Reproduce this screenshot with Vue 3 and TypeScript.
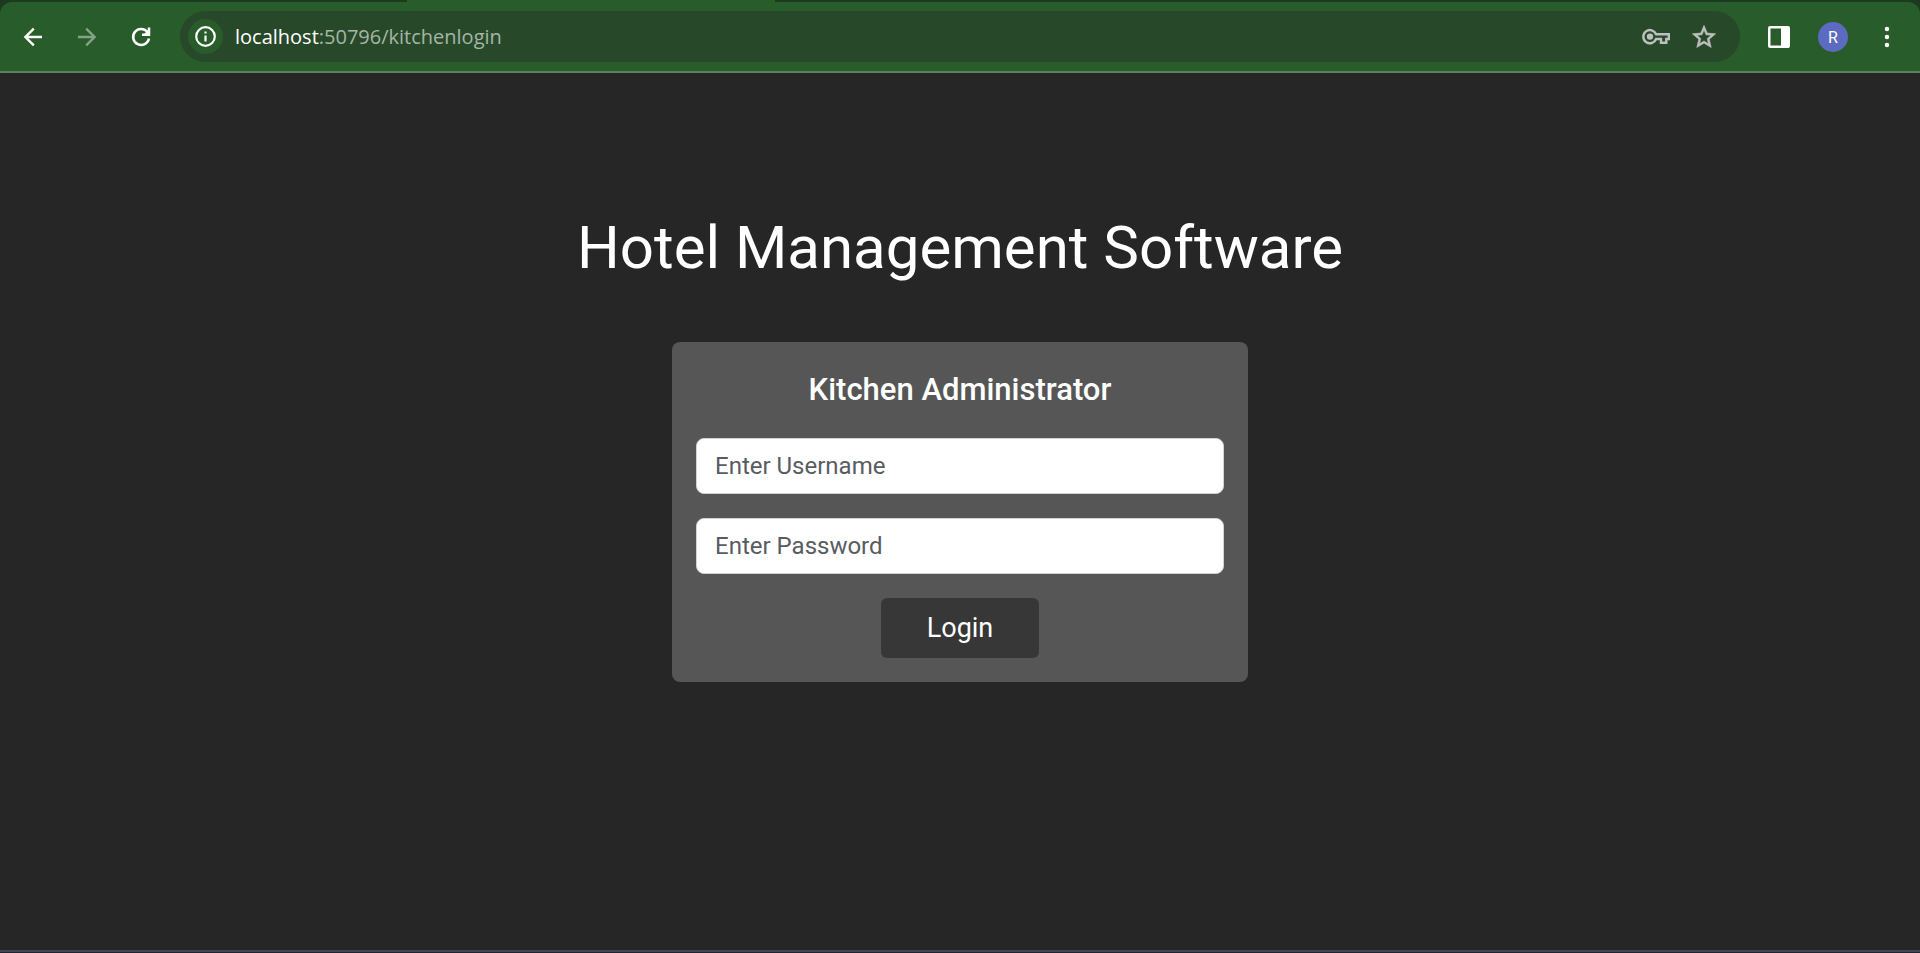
<script setup lang="ts">
import { ref } from 'vue'

const username = ref<string>('')
const password = ref<string>('')
</script>

<template>
  <div class="window">
    <div class="tab-strip"><div class="tab"></div></div>
    <div class="toolbar-back">
      <header class="toolbar">
        <nav class="tools">
          <button type="button" class="tool" aria-label="Back">
            <svg width="28" height="28" viewBox="0 0 28 28" fill="none" stroke="#fff" stroke-width="2.4">
              <path d="M23 14H7M14.8 5.6L6.4 14l8.4 8.4" />
            </svg>
          </button>
          <button type="button" class="tool" aria-label="Forward">
            <svg width="28" height="28" viewBox="0 0 28 28" fill="none" stroke="#83a385" stroke-width="2.4">
              <path d="M5 14h16M13.2 5.6l8.4 8.4l-8.4 8.4" />
            </svg>
          </button>
          <button type="button" class="tool" aria-label="Reload">
            <svg width="28" height="28" viewBox="0 0 28 28" fill="none" stroke="#fff" stroke-width="2.5">
              <path d="M22 15.4A8 8 0 1 1 20.6 9.2" />
              <path d="M22 4.6v7.2h-7" />
              <path d="M22 6l-5.5 5.8H22z" fill="#fff" stroke="none" />
            </svg>
          </button>
        </nav>

        <div class="address">
          <button type="button" class="site-info" aria-label="Site information">
            <svg width="23" height="23" viewBox="0 0 23 23" fill="none" stroke="#fff">
              <circle cx="11.5" cy="11.5" r="9.3" stroke-width="2.2" />
              <path d="M11.5 10.4v6M11.5 6.4v2.2" stroke-width="2.2" />
            </svg>
          </button>
          <div class="url" role="textbox" aria-label="Address" contenteditable="true"><span class="host">localhost</span>:50796/kitchenlogin</div>
          <button type="button" class="address-tool" aria-label="Saved passwords">
            <svg width="28" height="18" viewBox="0 0 28 18" fill="none" stroke="#bdc0be" stroke-width="2.4">
              <path d="M14.1 6.3H26.8V11H24.3V14.8H19V11H14.1A6.6 6.6 0 1 1 14.1 6.3Z" />
              <circle cx="8" cy="8.6" r="3.2" fill="#bdc0be" stroke="none" />
            </svg>
          </button>
          <button type="button" class="address-tool" aria-label="Bookmark this page">
            <svg width="28" height="28" viewBox="0 0 24 24" fill="#bdc0be" stroke="#bdc0be" stroke-width="0.5">
              <path d="M22 9.24l-7.19-.62L12 2 9.19 8.63 2 9.24l5.46 4.73L5.82 21 12 17.27 18.18 21l-1.63-7.03L22 9.24zM12 15.4l-3.76 2.27 1-4.28-3.32-2.88 4.38-.38L12 6.1l1.71 4.04 4.38.38-3.32 2.88 1 4.28L12 15.4z" />
            </svg>
          </button>
        </div>

        <div class="tools">
          <button type="button" class="tool" aria-label="Side panel">
            <svg width="22" height="22" viewBox="0 0 22 22">
              <rect width="22" height="22" rx="2" fill="#fff" />
              <path d="M2.5 2.5h10.5v17H2.5z" fill="#285c2a" />
            </svg>
          </button>
          <button type="button" class="tool" aria-label="Profile"><span class="avatar">R</span></button>
          <button type="button" class="tool" aria-label="Menu">
            <svg width="6" height="22" viewBox="0 0 6 22" fill="#fff">
              <circle cx="3" cy="3" r="2.3" />
              <circle cx="3" cy="11" r="2.3" />
              <circle cx="3" cy="19" r="2.3" />
            </svg>
          </button>
        </div>
      </header>
    </div>

    <main class="page">
      <h1 class="title">Hotel Management Software</h1>
      <form class="card" @submit.prevent>
        <h2 class="card-title">Kitchen Administrator</h2>
        <input v-model="username" class="field" type="text" placeholder="Enter Username" aria-label="Username" />
        <input v-model="password" class="field" type="password" placeholder="Enter Password" aria-label="Password" />
        <button type="submit" class="login">Login</button>
      </form>
    </main>
    <div class="window-edge"></div>
  </div>
</template>

<style>
body {
  margin: 0;
  background: #262626;
}
</style>

<style scoped>
* {
  box-sizing: border-box;
}
.window {
  display: flex;
  flex-direction: column;
  min-height: 100vh;
  background: #262626;
  font-family: Roboto, "Liberation Sans", sans-serif;
}
button {
  margin: 0;
  padding: 0;
  border: 0;
  background: none;
  font-family: inherit;
  cursor: pointer;
}
svg {
  display: block;
}
.tab-strip {
  height: 2px;
  padding-left: 407px;
  background: #1c3a1e;
}
.tab {
  width: 368px;
  height: 2px;
  background: #285c2a;
}
.toolbar-back {
  background: #1c3a1e;
}
.toolbar {
  display: flex;
  align-items: center;
  gap: 12px;
  padding: 9px 6px;
  border-bottom: 2px solid #5a835c;
  border-radius: 12px 12px 0 0;
  background: #285c2a;
}
.tools {
  display: flex;
}
.tool {
  display: flex;
  align-items: center;
  justify-content: center;
  width: 54px;
  height: 51px;
}
.address {
  display: flex;
  flex: 1;
  align-items: center;
  height: 51px;
  padding: 0 12px 0 8px;
  border-radius: 26px;
  background: #274929;
}
.site-info {
  display: flex;
  align-items: center;
  justify-content: center;
  width: 35px;
  height: 35px;
  border-radius: 50%;
  background: #285c2a;
}
.url {
  flex: 1;
  padding-left: 12px;
  color: #a5b5a6;
  font-family: "Open Sans", "Noto Sans", sans-serif;
  font-size: 20px;
  line-height: 28px;
  outline: none;
}
.host {
  color: #fff;
}
.address-tool {
  display: flex;
  align-items: center;
  justify-content: center;
  width: 48px;
  height: 48px;
}
.avatar {
  width: 30px;
  height: 30px;
  border-radius: 50%;
  background: #5c6bc0;
  color: #fff;
  font-size: 16px;
  line-height: 31px;
  text-align: center;
}
.page {
  display: flex;
  flex: 1;
  flex-direction: column;
  align-items: center;
  gap: 58px;
  padding: 139px 24px 48px;
}
.title {
  margin: 0;
  color: #fff;
  font-size: 60px;
  font-weight: 400;
  line-height: 72px;
  text-align: center;
}
.card {
  display: flex;
  flex-direction: column;
  align-items: center;
  gap: 24px;
  width: 100%;
  max-width: 576px;
  padding: 24px;
  border-radius: 8px;
  background: #565656;
}
.card-title {
  margin: 0;
  color: #fff;
  font-size: 31px;
  font-weight: 500;
  line-height: 48px;
}
.field {
  width: 100%;
  height: 56px;
  padding: 0 18px;
  border: 1px solid #ced4da;
  border-radius: 8px;
  background: #fff;
  color: #212529;
  font-family: inherit;
  font-size: 24px;
}
.field::placeholder {
  color: #595c5f;
  opacity: 1;
}
.login {
  width: 158px;
  height: 60px;
  border-radius: 6px;
  background: #373737;
  color: #fff;
  font-size: 27px;
}
.window-edge {
  height: 3px;
  border-bottom: 1px solid #1f2430;
  background: #45434f;
}
</style>
